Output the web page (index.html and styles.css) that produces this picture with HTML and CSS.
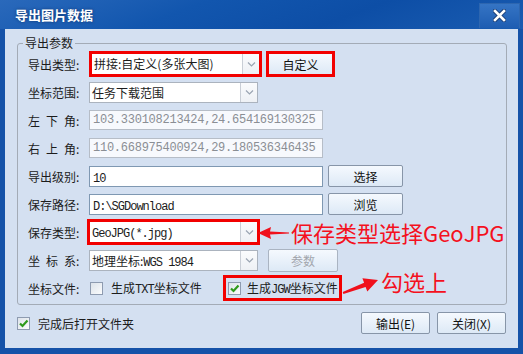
FILE: index.html
```html
<!DOCTYPE html>
<html lang="zh-CN">
<head>
    <meta charset="UTF-8">
    <title>导出图片数据</title>
    <link rel="stylesheet" href="styles.css">
</head>
<body>
<div class="window">

    <!-- Title bar -->
    <div class="titlebar">
        <span class="title">导出图片数据</span>
        <span class="close">
            <svg width="13" height="13" viewBox="0 0 13 13">
                <path d="M2 2 L11 11 M11 2 L2 11" stroke="#1b3f78" stroke-width="4.5" stroke-linecap="square"/>
                <path d="M2 2 L11 11 M11 2 L2 11" stroke="#fff" stroke-width="2.6" stroke-linecap="square"/>
            </svg>
        </span>
    </div>

    <div class="client">
        <fieldset class="group">
            <legend>导出参数</legend>

            <div class="row">
                <span class="label">导出类型:</span>
                <div class="mark">
                    <div class="combo in-mark">
                        <span class="value">拼接:自定义(多张大图)</span>
                        <span class="drop"><svg width="9" height="5" viewBox="0 0 9 5"><path d="M1 0.5 L4.5 4 L8 0.5" fill="none" stroke="#9aa4b2" stroke-width="1.2"/></svg></span>
                    </div>
                </div>
                <div class="mark mark-btn"><button class="btn btn-marked">自定义</button></div>
            </div>

            <div class="row">
                <span class="label">坐标范围:</span>
                <div class="combo">
                    <span class="value">任务下载范围</span>
                    <span class="drop"><svg width="9" height="5" viewBox="0 0 9 5"><path d="M1 0.5 L4.5 4 L8 0.5" fill="none" stroke="#9aa4b2" stroke-width="1.2"/></svg></span>
                </div>
            </div>

            <div class="row">
                <span class="label">左&ensp;下&ensp;角:</span>
                <div class="field disabled coord">103.330108213424,24.654169130325</div>
            </div>

            <div class="row">
                <span class="label">右&ensp;上&ensp;角:</span>
                <div class="field disabled coord">110.668975400924,29.180536346435</div>
            </div>

            <div class="row">
                <span class="label">导出级别:</span>
                <div class="field"><span class="latin">10</span></div>
                <button class="btn btn-side">选择</button>
            </div>

            <div class="row">
                <span class="label">保存路径:</span>
                <div class="field"><span class="latin">D:\SGDownload</span></div>
                <button class="btn btn-side">浏览</button>
            </div>

            <div class="row">
                <span class="label">保存类型:</span>
                <div class="mark mark-type">
                    <div class="combo in-mark">
                        <span class="value"><span class="latin">GeoJPG(*.jpg)</span></span>
                        <span class="drop"><svg width="9" height="5" viewBox="0 0 9 5"><path d="M1 0.5 L4.5 4 L8 0.5" fill="none" stroke="#9aa4b2" stroke-width="1.2"/></svg></span>
                    </div>
                </div>
            </div>

            <div class="row">
                <span class="label">坐&ensp;标&ensp;系:</span>
                <div class="combo">
                    <span class="value">地理坐标:<span class="latin">WGS 1984</span></span>
                    <span class="drop"><svg width="9" height="5" viewBox="0 0 9 5"><path d="M1 0.5 L4.5 4 L8 0.5" fill="none" stroke="#9aa4b2" stroke-width="1.2"/></svg></span>
                </div>
                <button class="btn btn-param" disabled>参数</button>
            </div>

            <div class="row">
                <span class="label">坐标文件:</span>
                <label class="checkitem txt">
                    <span class="check"></span>
                    <span>生成<span class="latin">TXT</span>坐标文件</span>
                </label>
                <div class="mark mark-check">
                    <label class="checkitem">
                        <span class="check">
                            <svg width="11" height="11" viewBox="0 0 11 11"><path d="M2 5.5 L4.5 8 L9.5 2.5" fill="none" stroke="#2e9a1c" stroke-width="2.2"/></svg>
                        </span>
                        <span>生成<span class="latin">JGW</span>坐标文件</span>
                    </label>
                </div>
            </div>
        </fieldset>

        <div class="footer">
            <label class="checkitem">
                <span class="check">
                    <svg width="11" height="11" viewBox="0 0 11 11"><path d="M2 5.5 L4.5 8 L9.5 2.5" fill="none" stroke="#2e9a1c" stroke-width="2.2"/></svg>
                </span>
                <span>完成后打开文件夹</span>
            </label>
            <div class="actions">
                <button class="btn btn-action">输出(E)</button>
                <button class="btn btn-action">关闭(X)</button>
            </div>
        </div>
    </div>

    <!-- Red annotations drawn over the dialog -->
    <svg class="arrow arrow-type" width="32" height="14" viewBox="0 0 32 14">
        <polygon points="0,7 13,1 12,5.5 31,6.5 31,7.5 12,8.5 13,13" fill="#f0101c"/>
    </svg>
    <div class="note note-type">保存类型选择GeoJPG</div>

    <svg class="arrow arrow-check" width="42" height="32" viewBox="0 0 42 32">
        <polygon points="38,14 22.4,12.3 24.1,16.8 2.7,26.1 3.4,27.9 25.6,21 27.3,25.5" fill="#f0101c"/>
    </svg>
    <div class="note note-check">勾选上</div>
</div>
</body>
</html>
```

FILE: styles.css
```css
body {
    margin: 0;
    font-family: "Noto Sans CJK SC", "Liberation Sans", sans-serif;
    font-size: 12px;
    color: #1c1c1c;
}

.window {
    position: relative;
    width: 523px;
    height: 354px;
    background: #1552a8;
    box-sizing: border-box;
    display: flex;
    flex-direction: column;
    overflow: hidden;
}

/* Title bar */

.titlebar {
    height: 29px;
    flex: none;
    display: flex;
    align-items: center;
    background: linear-gradient(160deg, #2a69bb 0%, #1256ae 35%, #0d4ea6 65%, #1a5cb1 100%);
}

.title {
    padding-left: 15px;
    color: #fff;
    font-size: 13px;
    font-weight: bold;
    text-shadow: 0 0 3px rgba(0, 20, 60, 0.6);
}

.close {
    margin-left: auto;
    margin-right: 3px;
    margin-top: 1px;
    width: 41px;
    height: 25px;
    display: flex;
    align-items: center;
    justify-content: center;
    background: linear-gradient(#3574c4, #1e5db2);
    border: 1px solid #2d66b0;
    border-bottom: none;
    box-sizing: border-box;
}

/* Client area */

.client {
    flex: 1;
    margin: 0 5px 6px 5px;
    background: #d4e0f1;
    display: flex;
    flex-direction: column;
}

.group {
    margin: 7px 11px 0 12px;
    padding: 0 10px 2px 10px;
    border: 1px solid #a3abb6;
    border-radius: 3px;
}

.group legend {
    margin-left: -5px;
    padding: 0 2px;
    font-size: 12px;
    line-height: 14px;
}

.row {
    height: 28px;
    display: flex;
    align-items: center;
}

.label {
    width: 61px;
    flex: none;
    white-space: nowrap;
}

.latin {
    font-family: "Liberation Mono", monospace;
    font-size: 12px;
    letter-spacing: -1px;
}

/* Red highlight boxes */

.mark {
    border: 3px solid #f20000;
    display: flex;
    flex: none;
}

.mark-btn {
    margin-left: 4px;
}

.mark-type {
    margin-left: -2px;
}

.mark-check {
    margin-left: 0;
    width: 119px;
    height: 26px;
    box-sizing: border-box;
    padding-left: 2px;
    align-items: center;
}

/* Combo boxes */

.combo {
    width: 169px;
    height: 21px;
    box-sizing: border-box;
    border: 1px solid #abb3be;
    background: #fff;
    display: flex;
    flex: none;
}

.combo.in-mark {
    width: 167px;
    height: 20px;
    border: none;
}

.combo .value {
    flex: 1;
    padding-left: 2px;
    line-height: 19px;
    white-space: nowrap;
    overflow: hidden;
}

.combo .drop {
    width: 16px;
    border-left: 1px solid #c9ced6;
    background: linear-gradient(#fafbfd, #eef1f5);
    display: flex;
    align-items: center;
    justify-content: center;
}

/* Text fields */

.field {
    width: 234px;
    height: 21px;
    box-sizing: border-box;
    border: 1px solid #7f98b2;
    background: #fff;
    padding-left: 3px;
    line-height: 19px;
    flex: none;
    white-space: nowrap;
    overflow: hidden;
}

.field.disabled {
    height: 20px;
    border-color: #b6bdc7;
    background: #f7f9fd;
    color: #8a8e94;
}

.coord {
    font-family: "Liberation Mono", monospace;
    font-size: 12px;
    letter-spacing: -0.25px;
}

/* Buttons */

.btn {
    height: 22px;
    padding: 0;
    border: 1px solid #8795a8;
    border-radius: 2px;
    background: linear-gradient(#f5f9fe, #dde9f6);
    font-family: "Noto Sans CJK SC", sans-serif;
    font-size: 12px;
    color: #111;
}

.btn-marked {
    width: 63px;
    height: 20px;
    border: none;
    border-radius: 0;
}

.btn-side {
    width: 75px;
    margin-left: 5px;
}

.btn-param {
    width: 70px;
    height: 23px;
    margin-left: 10px;
    border-color: #aab4c2;
    color: #a2a6ad;
}

.btn-action {
    width: 69px;
}

/* Check boxes */

.checkitem {
    display: flex;
    align-items: center;
    gap: 6px;
}

.check {
    width: 13px;
    height: 13px;
    box-sizing: border-box;
    border: 1px solid #8e9bb0;
    background: linear-gradient(135deg, #dde3ea, #fbfcfd);
    display: flex;
    align-items: center;
    justify-content: center;
    flex: none;
}

.txt {
    margin-left: 1px;
    width: 133px;
    gap: 8px;
}

/* Footer */

.footer {
    display: flex;
    align-items: center;
    padding: 7px 12px 0 12px;
}

.footer .checkitem {
    gap: 8px;
}

.actions {
    margin-left: auto;
    display: flex;
    gap: 7px;
}

/* Annotations */

.arrow {
    position: absolute;
}

.arrow-type {
    left: 258px;
    top: 226px;
}

.arrow-check {
    left: 340px;
    top: 266px;
}

.note {
    position: absolute;
    color: #f41020;
    font-size: 22px;
    line-height: 26px;
    white-space: nowrap;
}

.note-type {
    left: 291px;
    top: 219px;
}

.note-check {
    left: 381px;
    top: 268px;
}
```
